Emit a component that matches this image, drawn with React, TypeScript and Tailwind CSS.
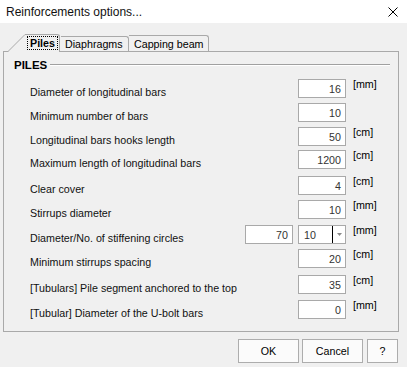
import React from "react";

type Row = { label: string; value: string; unit: string; mt: string; combo?: boolean };

const rows: Row[] = [
  { label: "Diameter of longitudinal bars", value: "16", unit: "[mm]", mt: "mt-[7px]" },
  { label: "Minimum number of bars", value: "10", unit: "", mt: "mt-[5px]" },
  { label: "Longitudinal bars hooks length", value: "50", unit: "[cm]", mt: "mt-[5px]" },
  { label: "Maximum length of longitudinal bars", value: "1200", unit: "[cm]", mt: "mt-[4px]" },
  { label: "Clear cover", value: "4", unit: "[cm]", mt: "mt-[7px]" },
  { label: "Stirrups diameter", value: "10", unit: "[mm]", mt: "mt-[5px]" },
  { label: "Diameter/No. of stiffening circles", value: "10", unit: "[mm]", mt: "mt-[6px]", combo: true },
  { label: "Minimum stirrups spacing", value: "20", unit: "[cm]", mt: "mt-[5px]" },
  { label: "[Tubulars] Pile segment anchored to the top", value: "35", unit: "[cm]", mt: "mt-[7px]" },
  { label: "[Tubular] Diameter of the U-bolt bars", value: "0", unit: "[mm]", mt: "mt-[6px]" },
];

function Box({ value }: { value: string }) {
  return (
    <div className="w-[48px] h-[19px] bg-white border border-[#a9a9a9] flex items-center justify-end pr-[4px] text-[10.7px] leading-[14px] text-[#333]">
      {value}
    </div>
  );
}

function Combo({ value }: { value: string }) {
  return (
    <div className="w-[48px] h-[19px] bg-white border border-[#a9a9a9] flex items-center text-[10.7px] leading-[14px] text-[#333]">
      <div className="flex-1 pl-[5px]">{value}</div>
      <div className="w-px h-[17px] bg-black" />
      <div className="w-[12px] h-full flex items-center justify-center">
        <svg width="5" height="3" viewBox="0 0 5 3">
          <path d="M0 0 L5 0 L2.5 3 Z" fill="#8a8a8a" />
        </svg>
      </div>
    </div>
  );
}

export default function App() {
  return (
    <div
      className="w-[407px] h-[367px] bg-[#f0f0f0] flex flex-col text-black overflow-hidden"
      style={{ fontFamily: '"Liberation Sans", Arial, sans-serif' }}
    >
      {/* Title bar */}
      <div className="h-[23px] bg-white flex items-center justify-between pl-[6px] pr-[9px] shrink-0">
        <span className="text-[12px] leading-[16px] text-[#111]">Reinforcements options...</span>
        <svg width="10" height="10" viewBox="0 0 10 10">
          <path d="M0.5 0.5 L9.5 9.5 M9.5 0.5 L0.5 9.5" stroke="#000" strokeWidth="1" />
        </svg>
      </div>

      {/* Tabs */}
      <div className="pt-[11px] pl-[3px] pr-[8px] shrink-0">
        <div className="relative z-10 flex items-end h-[18px] -mb-px pl-[5px] text-[10.7px] leading-[14px]">
          <svg width="17" height="18" viewBox="0 0 17 18" className="shrink-0">
            <polygon points="0,18 17,0 17,18" fill="#f0f0f0" />
            <line x1="0" y1="17.5" x2="17" y2="0.5" stroke="#a9a9a9" strokeWidth="1" />
          </svg>
          <div className="h-[18px] w-[35px] bg-[#f0f0f0] border-t border-r border-[#a9a9a9] rounded-tr-[3px] flex items-start pt-[1px] pl-[2px]">
            <div className="border border-dotted border-black px-[2px] h-[14px] font-bold leading-[12px]">Piles</div>
          </div>
          <div className="h-[15px] mb-[1px] w-[68px] border-t border-r border-[#a9a9a9] rounded-tr-[3px] bg-[#f0f0f0] flex items-center pl-[4px] ml-px">
            Diaphragms
          </div>
          <div className="h-[16px] mb-[1px] w-[80px] border-t border-r border-[#a9a9a9] rounded-tr-[3px] bg-[#f0f0f0] flex items-center pl-[5px]">
            Capping beam
          </div>
        </div>

        {/* Panel */}
        <div className="h-[281px] border border-[#a9a9a9] flex flex-col text-[10.7px] leading-[14px]">
          <div className="flex items-center mt-[6px] pl-[10px] pr-[8px] h-[14px]">
            <span className="font-bold text-[11.5px]">PILES</span>
            <div className="flex-1 ml-[3px] h-[2px] border-t border-[#a0a0a0] border-b border-b-white" />
          </div>
          {rows.map((r) => (
            <div key={r.label} className={`flex items-start h-[19px] pl-[26px] ${r.mt}`}>
              <div className="flex-1 pt-[6px] text-[#111]">{r.label}</div>
              {r.combo && (
                <div className="mr-[5px]">
                  <Box value="70" />
                </div>
              )}
              {r.combo ? <Combo value={r.value} /> : <Box value={r.value} />}
              <div className="w-[52px] pl-[7px] -mt-[2px]">{r.unit}</div>
            </div>
          ))}
        </div>
      </div>

      {/* Buttons */}
      <div className="flex justify-end gap-[3px] pr-[9px] mt-[7px] text-[10.7px]">
        <button className="w-[61px] h-[24px] bg-[#fbfbfb] border border-[#adadad] flex items-center justify-center">OK</button>
        <button className="w-[61px] h-[24px] bg-[#fbfbfb] border border-[#adadad] flex items-center justify-center">Cancel</button>
        <button className="w-[31px] h-[24px] bg-[#fbfbfb] border border-[#adadad] flex items-center justify-center ml-[1px]">?</button>
      </div>
    </div>
  );
}
